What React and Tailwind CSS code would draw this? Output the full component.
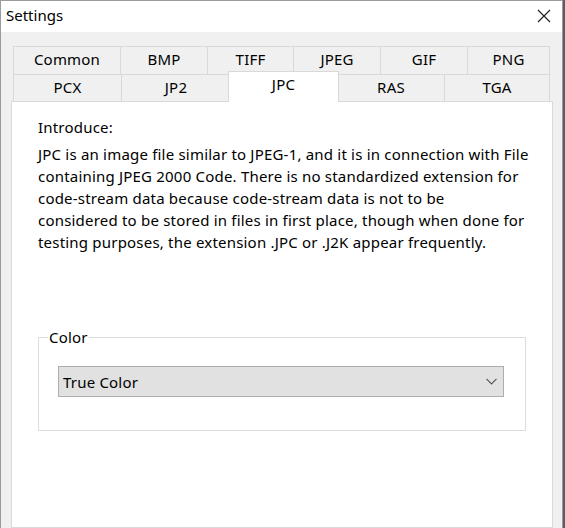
import React from "react";

const row1 = [
  { label: "Common", w: "w-[107px]" },
  { label: "BMP", w: "w-[87px]" },
  { label: "TIFF", w: "w-[86px]" },
  { label: "JPEG", w: "w-[87px]" },
  { label: "GIF", w: "w-[87px]" },
  { label: "PNG", w: "w-[83px]", last: true },
];

const lines = [
  "JPC is an image file similar to JPEG-1, and it is in connection with File",
  "containing JPEG 2000 Code. There is no standardized extension for",
  "code-stream data because code-stream data is not to be",
  "considered to be stored in files in first place, though when done for",
  "testing purposes, the extension .JPC or .J2K appear frequently.",
];

export default function App() {
  return (
    <div
      className="flex w-[565px] h-[528px] overflow-hidden bg-[#5c5c5c] text-[15px] text-[#000]"
      style={{ fontFamily: '"Noto Sans", "Open Sans", sans-serif' }}
    >
      <div className="flex flex-col w-[563px] h-full border-l border-r border-t border-[#9b9b9b] bg-[#f0f0f0]">
        {/* title bar */}
        <div className="flex items-center justify-between h-[31px] bg-white pl-[5px] pr-[10px] pb-[3px] shrink-0">
          <span className="leading-[22px]">Settings</span>
          <svg width="14" height="14" viewBox="0 0 14 14" className="mr-[1px] mt-[1px]">
            <path d="M1 1 L13 13 M13 1 L1 13" stroke="#1a1a1a" strokeWidth="1.1" fill="none" />
          </svg>
        </div>

        {/* body */}
        <div className="flex flex-col flex-1 pt-[14px] pl-[10px] pr-[9px]">
          {/* tabs */}
          <div className="flex flex-col ml-[2px] tracking-[0.2px]">
            <div className="flex">
              {row1.map((t) => (
                <div
                  key={t.label}
                  className={`${t.w} h-[28px] flex items-center justify-center pb-[3px] border-t border-l border-[#d9d9d9] ${
                    t.last ? "border-r" : ""
                  } leading-[22px]`}
                >
                  {t.label}
                </div>
              ))}
            </div>
            <div className="flex items-start">
              <div className="w-[108px] h-[27px] flex items-center justify-center pb-[2px] border-t border-l border-[#d9d9d9] leading-[22px]">
                PCX
              </div>
              <div className="w-[109px] h-[27px] flex items-center justify-center pb-[2px] border-t border-l border-[#d9d9d9] leading-[22px]">
                JP2
              </div>
              <div className="relative z-10 w-[111px] h-[31px] -mt-[3px] -mb-[1px] -ml-[2px] -mr-[2px] flex justify-center pt-[1px] bg-white border-t border-l border-r border-[#d9d9d9] leading-[22px]">
                JPC
              </div>
              <div className="w-[107px] h-[27px] flex items-center justify-center pb-[2px] border-t border-l border-[#d9d9d9] leading-[22px]">
                RAS
              </div>
              <div className="w-[106px] h-[27px] flex items-center justify-center pb-[2px] border-t border-l border-r border-[#d9d9d9] leading-[22px]">
                TGA
              </div>
            </div>
          </div>

          {/* panel */}
          <div className="flex-1 bg-white border border-[#d9d9d9] pt-[14px] px-[26px] leading-[22px] tracking-[0.2px]">
            <div>Introduce:</div>
            <div className="mt-[5px]">
              {lines.map((l) => (
                <div key={l} className="whitespace-nowrap">
                  {l}
                </div>
              ))}
            </div>

            <fieldset className="mt-[73px] border border-[#dcdcdc] p-0">
              <legend className="ml-[9px] px-[1px] leading-[22px]">Color</legend>
              <div className="mt-[18px] mb-[33px] ml-[19px] mr-[21px] h-[31px] flex items-center justify-between bg-[#e1e1e1] border border-[#adadad] pl-[4px] pr-[6px]">
                <span>True Color</span>
                <svg width="11" height="7" viewBox="0 0 11 7">
                  <path d="M0.5 0.8 L5.5 5.8 L10.5 0.8" stroke="#5a5a5a" strokeWidth="1.2" fill="none" />
                </svg>
              </div>
            </fieldset>
          </div>
        </div>
      </div>
    </div>
  );
}
